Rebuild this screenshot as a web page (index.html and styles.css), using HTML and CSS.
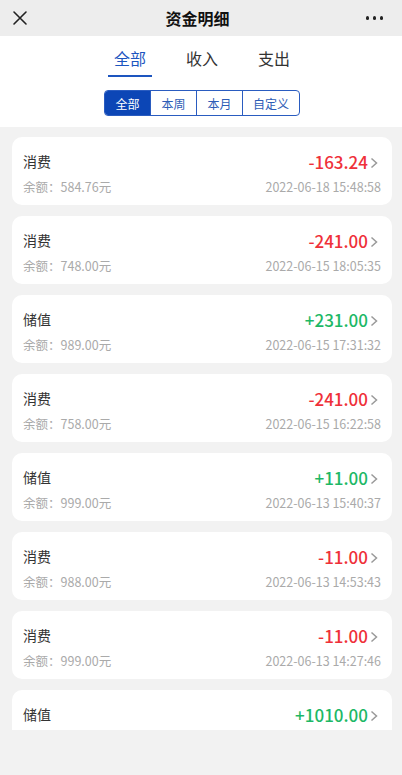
FILE: index.html
```html
<!DOCTYPE html>
<html lang="zh-CN">
<head>
    <meta charset="UTF-8">
    <meta name="viewport" content="width=device-width, initial-scale=1.0">
    <title>资金明细</title>
    <link rel="stylesheet" href="styles.css">
</head>
<body>
    <header class="navbar">
        <div class="nav-side">
            <svg class="icon-close" width="16" height="16" viewBox="0 0 16 16">
                <path d="M2 2 L14 14 M14 2 L2 14" stroke="#222" stroke-width="1.6" fill="none" stroke-linecap="round"/>
            </svg>
        </div>
        <h1 class="nav-title">资金明细</h1>
        <div class="nav-side nav-right">
            <span class="dot"></span><span class="dot"></span><span class="dot"></span>
        </div>
    </header>

    <section class="filter">
        <nav class="tabs">
            <span class="tab active">全部</span>
            <span class="tab">收入</span>
            <span class="tab">支出</span>
        </nav>
        <div class="segment">
            <span class="seg active">全部</span>
            <span class="seg">本周</span>
            <span class="seg">本月</span>
            <span class="seg seg-wide">自定义</span>
        </div>
    </section>

    <main class="list">
        <div class="card">
            <div class="row">
                <span class="kind">消费</span>
                <span class="amount minus">-163.24<svg class="chev" width="14" height="14" viewBox="0 0 14 14"><path d="M3.5 2.5 L8.5 7 L3.5 11.5" stroke="#999" stroke-width="1.5" fill="none"/></svg></span>
            </div>
            <div class="row sub">
                <span>余额：584.76元</span>
                <span>2022-06-18 15:48:58</span>
            </div>
        </div>

        <div class="card">
            <div class="row">
                <span class="kind">消费</span>
                <span class="amount minus">-241.00<svg class="chev" width="14" height="14" viewBox="0 0 14 14"><path d="M3.5 2.5 L8.5 7 L3.5 11.5" stroke="#999" stroke-width="1.5" fill="none"/></svg></span>
            </div>
            <div class="row sub">
                <span>余额：748.00元</span>
                <span>2022-06-15 18:05:35</span>
            </div>
        </div>

        <div class="card">
            <div class="row">
                <span class="kind">储值</span>
                <span class="amount plus">+231.00<svg class="chev" width="14" height="14" viewBox="0 0 14 14"><path d="M3.5 2.5 L8.5 7 L3.5 11.5" stroke="#999" stroke-width="1.5" fill="none"/></svg></span>
            </div>
            <div class="row sub">
                <span>余额：989.00元</span>
                <span>2022-06-15 17:31:32</span>
            </div>
        </div>

        <div class="card">
            <div class="row">
                <span class="kind">消费</span>
                <span class="amount minus">-241.00<svg class="chev" width="14" height="14" viewBox="0 0 14 14"><path d="M3.5 2.5 L8.5 7 L3.5 11.5" stroke="#999" stroke-width="1.5" fill="none"/></svg></span>
            </div>
            <div class="row sub">
                <span>余额：758.00元</span>
                <span>2022-06-15 16:22:58</span>
            </div>
        </div>

        <div class="card">
            <div class="row">
                <span class="kind">储值</span>
                <span class="amount plus">+11.00<svg class="chev" width="14" height="14" viewBox="0 0 14 14"><path d="M3.5 2.5 L8.5 7 L3.5 11.5" stroke="#999" stroke-width="1.5" fill="none"/></svg></span>
            </div>
            <div class="row sub">
                <span>余额：999.00元</span>
                <span>2022-06-13 15:40:37</span>
            </div>
        </div>

        <div class="card">
            <div class="row">
                <span class="kind">消费</span>
                <span class="amount minus">-11.00<svg class="chev" width="14" height="14" viewBox="0 0 14 14"><path d="M3.5 2.5 L8.5 7 L3.5 11.5" stroke="#999" stroke-width="1.5" fill="none"/></svg></span>
            </div>
            <div class="row sub">
                <span>余额：988.00元</span>
                <span>2022-06-13 14:53:43</span>
            </div>
        </div>

        <div class="card">
            <div class="row">
                <span class="kind">消费</span>
                <span class="amount minus">-11.00<svg class="chev" width="14" height="14" viewBox="0 0 14 14"><path d="M3.5 2.5 L8.5 7 L3.5 11.5" stroke="#999" stroke-width="1.5" fill="none"/></svg></span>
            </div>
            <div class="row sub">
                <span>余额：999.00元</span>
                <span>2022-06-13 14:27:46</span>
            </div>
        </div>

        <div class="card">
            <div class="row">
                <span class="kind">储值</span>
                <span class="amount plus">+1010.00<svg class="chev" width="14" height="14" viewBox="0 0 14 14"><path d="M3.5 2.5 L8.5 7 L3.5 11.5" stroke="#999" stroke-width="1.5" fill="none"/></svg></span>
            </div>
        </div>
    </main>

    <div class="bottom-space"></div>
</body>
</html>
```

FILE: styles.css
```css
html, body {
    height: 100%;
}
body {
    margin: 0;
    font-family: "Noto Sans CJK SC", "Noto Sans", sans-serif;
    background-color: #f2f2f2;
    color: #333;
    display: flex;
    flex-direction: column;
    overflow: hidden;
}

/* top bar */
.navbar {
    height: 36px;
    flex-shrink: 0;
    background-color: #ededed;
    display: flex;
    align-items: center;
}
.nav-side {
    width: 60px;
    display: flex;
    align-items: center;
    padding-left: 12px;
}
.nav-right {
    justify-content: flex-end;
    padding-left: 0;
    padding-right: 19px;
    gap: 3.5px;
}
.dot {
    width: 3.5px;
    height: 3.5px;
    border-radius: 50%;
    background-color: #222;
}
.nav-title {
    flex: 1;
    margin: 0;
    text-align: center;
    font-size: 16px;
    font-weight: 600;
    color: #111;
}

/* filter area */
.filter {
    flex-shrink: 0;
    background-color: #ffffff;
    padding: 11px 0 11px;
    display: flex;
    flex-direction: column;
    align-items: center;
}
.tabs {
    display: flex;
    gap: 28px;
    margin-left: 2px;
}
.tab {
    width: 44px;
    text-align: center;
    font-size: 16px;
    line-height: 22px;
    padding-bottom: 6px;
    border-bottom: 2px solid transparent;
    color: #333;
}
.tab.active {
    color: #1d55bf;
    border-bottom-color: #1d55bf;
}
.segment {
    margin-top: 13px;
    margin-left: 2px;
    display: flex;
    height: 26px;
    border: 1px solid #2a5cc0;
    border-radius: 4px;
    overflow: hidden;
    box-sizing: border-box;
}
.seg {
    width: 45px;
    display: flex;
    align-items: center;
    justify-content: center;
    font-size: 12px;
    color: #2d5cb6;
    border-left: 1px solid #2a5cc0;
}
.seg:first-child {
    border-left: none;
}
.seg.active {
    background-color: #0c46b6;
    color: #ffffff;
}
.seg-wide {
    width: 56px;
}

/* records */
.list {
    flex: 1;
    overflow: hidden;
    padding: 10px 10px 0 12px;
    display: flex;
    flex-direction: column;
    gap: 11px;
}
.card {
    flex-shrink: 0;
    height: 68px;
    box-sizing: border-box;
    background-color: #ffffff;
    border-radius: 10px;
    padding: 13px 11px 0 11px;
}
.row {
    display: flex;
    justify-content: space-between;
    align-items: center;
    height: 22px;
}
.kind {
    font-size: 14px;
    color: #333;
}
.amount {
    display: flex;
    align-items: center;
    font-size: 17px;
    font-weight: 500;
    margin-right: -1px;
}
.chev {
    margin-top: 4px;
}
.minus {
    color: #ef3039;
}
.plus {
    color: #1db866;
}
.sub {
    margin-top: 5px;
    height: 18px;
    font-size: 12.5px;
    color: #aaaaaa;
}
.bottom-space {
    height: 45px;
    flex-shrink: 0;
}
```
